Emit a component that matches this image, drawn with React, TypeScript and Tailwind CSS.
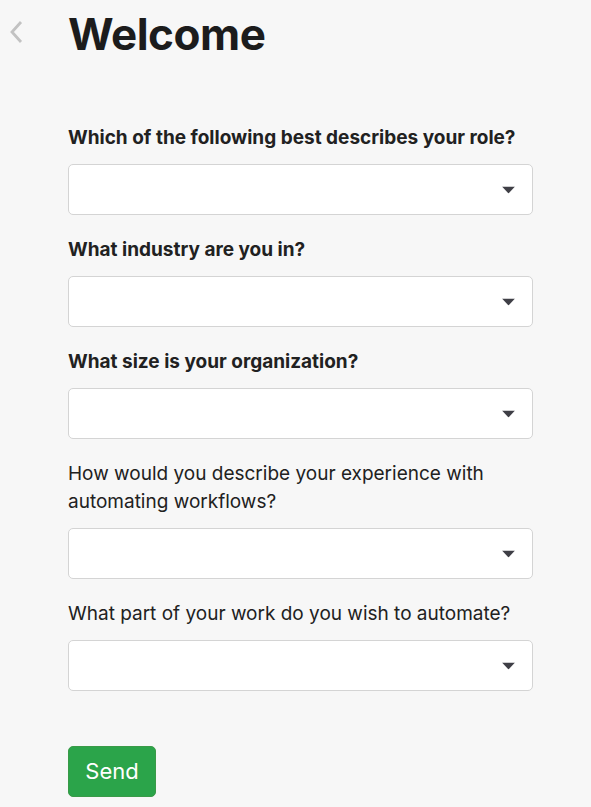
import React from "react";

const Caret = () => (
  <svg width="13" height="7" viewBox="0 0 13 7" className="absolute right-[17px] top-1/2 -translate-y-1/2">
    <path d="M0 0 H13 L6.5 7 Z" fill="#3f3f46" />
  </svg>
);

const Field = ({ label, bold }: { label: React.ReactNode; bold?: boolean }) => (
  <div className="flex flex-col">
    <label
      className={`text-[19px] leading-[28px] text-[#212121] ${bold ? "font-bold" : "font-normal"}`}
    >
      {label}
    </label>
    <div className="relative mt-3 h-[51px] w-[465px] rounded-[5px] border border-[#d4d4d4] bg-white">
      <Caret />
    </div>
  </div>
);

export default function App() {
  return (
    <div className="min-h-[807px] w-[591px] bg-[#f7f7f7]" style={{ fontFamily: "Inter, 'Liberation Sans', sans-serif" }}>
      <div className="relative pl-[68px] pt-[6px]">
        <svg width="16" height="24" viewBox="0 0 16 24" className="absolute left-[8px] top-[20px]">
          <path d="M13 2 L4 12 L13 22" stroke="#c2c2c2" strokeWidth="2.8" fill="none" />
        </svg>
        <h1 className="text-[44px] font-bold leading-[56px] text-[#1c1c1c] tracking-[-0.5px]">Welcome</h1>
        <div className="mt-[62px] flex flex-col gap-[21px]">
          <Field bold label="Which of the following best describes your role?" />
          <Field bold label="What industry are you in?" />
          <Field bold label="What size is your organization?" />
          <Field label={<>How would you describe your experience with<br />automating workflows?</>} />
          <Field label="What part of your work do you wish to automate?" />
        </div>
        <button className="mt-[55px] h-[51px] w-[88px] rounded-[5px] border border-[#3a9a48] bg-[#2ba44a] text-[22px] text-white">
          Send
        </button>
      </div>
    </div>
  );
}
